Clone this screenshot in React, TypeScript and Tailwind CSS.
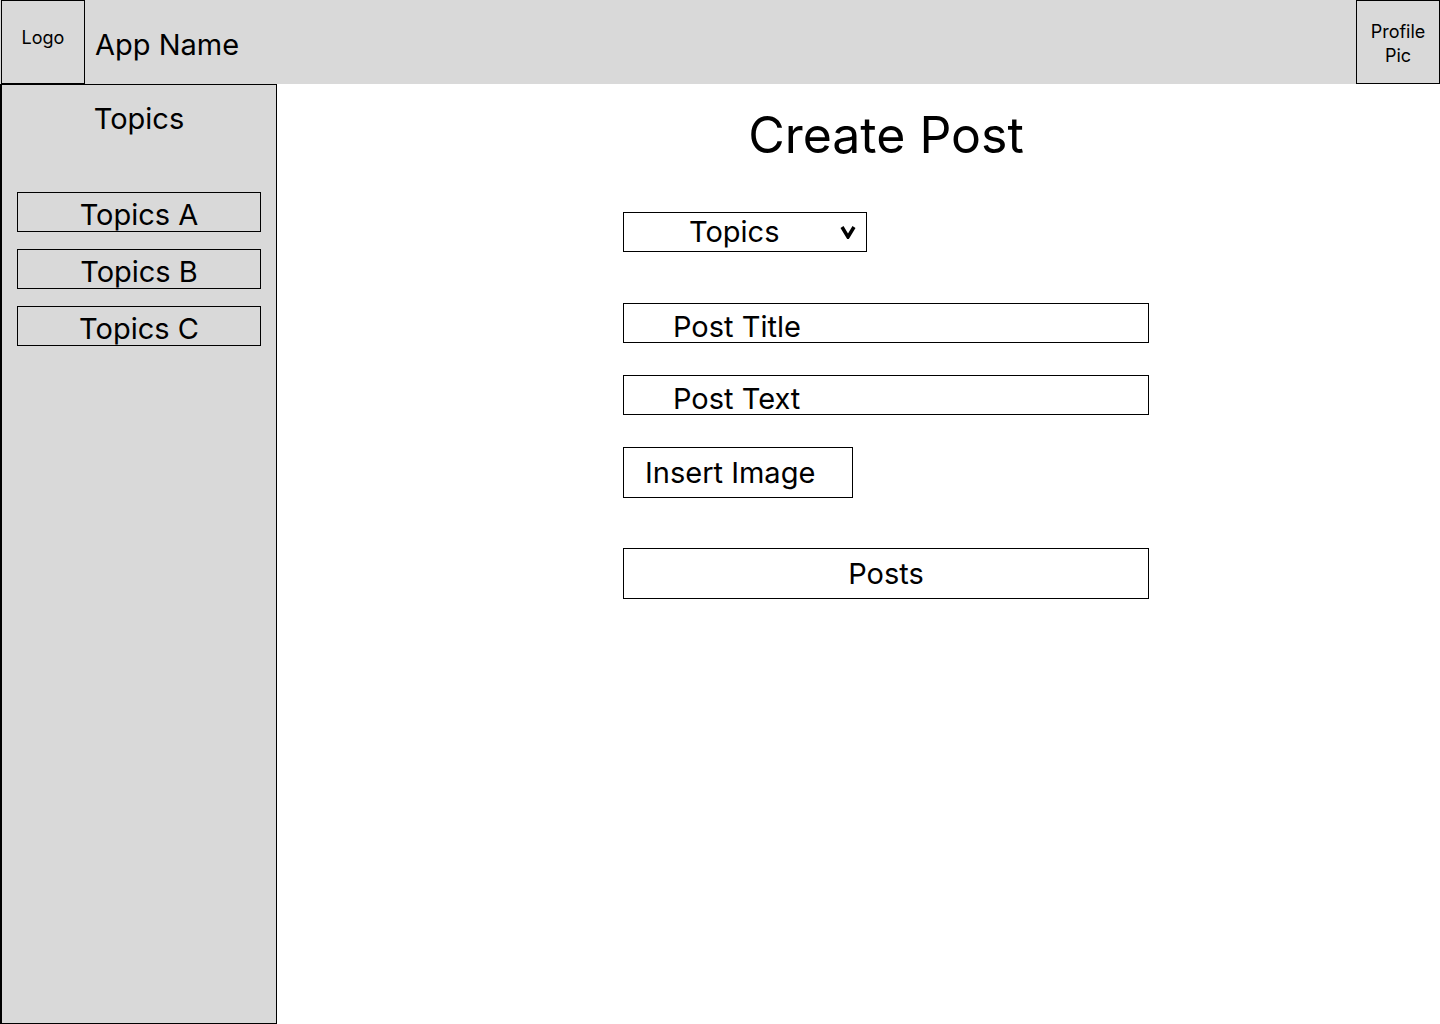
export default function App() {
  return (
    <div className="flex h-screen w-full flex-col bg-white font-['Inter',sans-serif] text-black">
      {/* Header */}
      <header className="flex h-[84px] shrink-0 items-start bg-[#d9d9d9]">
        <div className="ml-px flex h-[84px] w-[84px] shrink-0 justify-center border border-black pt-[26px] text-[18px] leading-[22px]">
          Logo
        </div>
        <div className="pl-[10px] pt-[27px] text-[29px] leading-[35px]">App Name</div>
        <div className="ml-auto flex h-[84px] w-[84px] shrink-0 flex-col items-center border border-black pt-[19px] text-center text-[18px] leading-[24px]">
          <span>Profile</span>
          <span>Pic</span>
        </div>
      </header>

      <div className="flex min-h-0 flex-1">
        {/* Sidebar */}
        <aside className="flex w-[277px] shrink-0 flex-col border-t border-r border-b border-l-2 border-black bg-[#d9d9d9] pt-[16px]">
          <h2 className="text-center text-[29px] font-normal leading-[36px]">Topics</h2>
          <div className="mt-[55px] flex flex-col gap-[17px] pl-[15px]">
            {["Topics A", "Topics B", "Topics C"].map((t) => (
              <div
                key={t}
                className="h-[40px] w-[244px] border border-black text-center text-[29px] leading-[44px]"
              >
                {t}
              </div>
            ))}
          </div>
        </aside>

        {/* Main */}
        <main className="flex-1 pl-[346px] pt-[21px]">
          <div className="flex w-[526px] flex-col">
            <h1 className="text-center text-[50px] font-normal leading-[60px]">Create Post</h1>

            <div className="mt-[47px] flex h-[40px] w-[244px] items-start justify-between border border-black pl-[65px] pr-[10px]">
              <span className="text-[29px] leading-[38px]">Topics</span>
              <svg width="16" height="14" viewBox="0 0 16 14" className="mt-[12px]">
                <polyline points="2,2 8,12 14,2" fill="none" stroke="black" strokeWidth="3.5" strokeLinejoin="miter" />
              </svg>
            </div>

            <div className="mt-[51px] h-[40px] w-[526px] border border-black pl-[49px] text-[29px] leading-[46px]">
              Post Title
            </div>

            <div className="mt-[32px] h-[40px] w-[526px] border border-black pl-[49px] text-[29px] leading-[45px]">
              Post Text
            </div>

            <button className="mt-[32px] h-[51px] w-[230px] border border-black pl-[21px] text-left text-[29px] leading-[48px]">
              Insert Image
            </button>

            <button className="mt-[50px] h-[51px] w-[526px] border border-black text-center text-[29px] leading-[48px]">
              Posts
            </button>
          </div>
        </main>
      </div>
    </div>
  )
}
